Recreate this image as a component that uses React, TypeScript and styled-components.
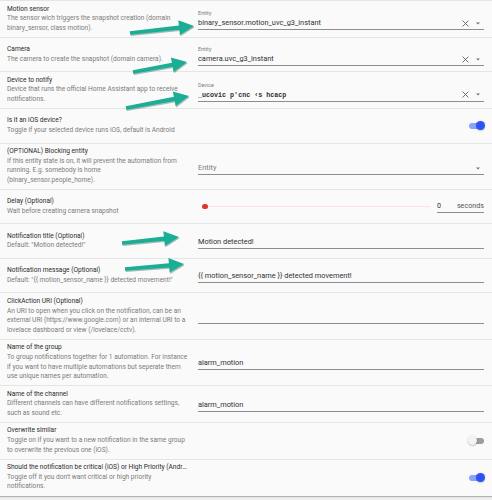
import React from 'react';
import styled, { createGlobalStyle } from 'styled-components';

const GlobalStyle = createGlobalStyle`
  html, body { margin: 0; padding: 0; background: #efefef; }
  body { font-family: Roboto, "Noto Sans", sans-serif; }
  * { box-sizing: border-box; }
`;

const Page = styled.div`
  position: relative;
  width: 492px;
  height: 500px;
  overflow: hidden;
  background: #efefef;
`;

const Card = styled.div`
  background: #fafafa;
  box-shadow: 0 1px 1px rgba(0, 0, 0, 0.25);
`;

const Row = styled.div`
  display: flex;
  align-items: center;
  min-height: 34.5px;
  padding: 3.5px 8px 3.5px 7px;
  border-top: 1px solid #e5e5e5;
`;

const Info = styled.div`
  flex: none;
  width: 182px;
  font-size: 6.6px;
  line-height: 9.6px;
`;

const Title = styled.div`
  color: #2a2a2a;
  max-width: 180px;
  white-space: nowrap;
  overflow: hidden;
  text-overflow: ellipsis;
`;

const Desc = styled.div`
  color: #7a7a7a;
`;

const Control = styled.div`
  flex: 1;
  min-width: 0;
  margin-left: 9px;
  display: flex;
  justify-content: flex-end;
  align-items: center;
`;

const Field = styled.div<{ $labeled?: boolean }>`
  flex: 1;
  min-width: 0;
  display: flex;
  flex-direction: column;
  padding-top: ${(p) => (p.$labeled ? 4 : 3)}px;
  padding-bottom: 1px;
  border-bottom: 1px solid #8e8e8e;
`;

const FloatLabel = styled.div`
  font-size: 5.4px;
  line-height: 5px;
  color: #7a7a7a;
  margin-bottom: 2px;
`;

const ValueRow = styled.div`
  display: flex;
  align-items: center;
  height: 10px;
`;

const Value = styled.div<{ $placeholder?: boolean; $scrambled?: boolean }>`
  flex: 1;
  min-width: 0;
  font-family: ${(p) => (p.$scrambled ? '"Liberation Mono", monospace' : 'Roboto, "Noto Sans", sans-serif')};
  font-weight: ${(p) => (p.$scrambled ? 700 : 400)};
  font-size: ${(p) => (p.$scrambled ? '6.7px' : '7.4px')};
  line-height: 10px;
  color: ${(p) => (p.$placeholder ? '#7a7a7a' : '#303030')};
  white-space: nowrap;
  overflow: hidden;
`;

const IconButton = styled.span<{ $gap: number }>`
  display: flex;
  align-items: center;
  justify-content: center;
  margin-right: ${(p) => p.$gap}px;
`;

const SliderWrap = styled.div`
  flex: 1;
  position: relative;
  height: 10px;
  display: flex;
  align-items: center;
  margin-left: 7px;
  margin-right: 7px;
`;

const Track = styled.div`
  flex: 1;
  height: 1.5px;
  background: #fbe2e2;
`;

const Knob = styled.div`
  position: absolute;
  left: -2.7px;
  top: 2.3px;
  width: 5.4px;
  height: 5.4px;
  border-radius: 50%;
  background: #e0342c;
`;

const NumberField = styled.div`
  flex: none;
  width: 47px;
  display: flex;
  justify-content: space-between;
  align-items: center;
  padding-top: 1px;
  padding-bottom: 1px;
  border-bottom: 1px solid #8e8e8e;
  font-size: 7.2px;
  line-height: 10px;
`;

const NumberValue = styled.span`
  color: #303030;
`;

const Suffix = styled.span`
  color: #555;
`;

const Switch = styled.div<{ $on: boolean }>`
  position: relative;
  width: 17px;
  height: 9px;
  display: flex;
  align-items: center;
  margin-right: -1px;
`;

const SwitchTrack = styled.div<{ $on: boolean }>`
  flex: 1;
  margin: 0 1px;
  height: 6px;
  border-radius: 3px;
  background: ${(p) => (p.$on ? '#8ea2fb' : '#9c9c9c')};
`;

const SwitchKnob = styled.div<{ $on: boolean }>`
  position: absolute;
  top: 0;
  left: ${(p) => (p.$on ? 8 : 0)}px;
  width: 9px;
  height: 9px;
  border-radius: 50%;
  background: ${(p) => (p.$on ? '#2c52fb' : '#f4f4f4')};
  box-shadow: 0 0.5px 1.5px rgba(0, 0, 0, 0.35);
`;

const Overlay = styled.svg`
  position: absolute;
  left: 0;
  top: 0;
  pointer-events: none;
`;

const ClearIcon = () => (
  <svg width="7" height="7" viewBox="0 0 7 7">
    <path d="M0.6 0.6 L6.4 6.4 M6.4 0.6 L0.6 6.4" stroke="#5f5f5f" strokeWidth="0.9" fill="none" />
  </svg>
);

const Caret = () => (
  <svg width="4" height="3" viewBox="0 0 4 3">
    <path d="M0 0.4 L4 0.4 L2 2.6 Z" fill="#6f6f6f" />
  </svg>
);

type FieldProps = { label?: string; value?: string; placeholder?: string; clear?: boolean; caret?: boolean; scrambled?: boolean };

const TextField = ({ label, value, placeholder, clear, caret, scrambled }: FieldProps) => (
  <Field $labeled={!!label || !!placeholder}>
    {label ? <FloatLabel>{label}</FloatLabel> : placeholder ? <FloatLabel /> : null}
    <ValueRow>
      <Value $placeholder={!value && !!placeholder} $scrambled={scrambled}>
        {value || placeholder || ''}
      </Value>
      {clear && (
        <IconButton $gap={7.5}>
          <ClearIcon />
        </IconButton>
      )}
      {caret && (
        <IconButton $gap={4}>
          <Caret />
        </IconButton>
      )}
    </ValueRow>
  </Field>
);

const Toggle = ({ on }: { on: boolean }) => (
  <Switch $on={on}>
    <SwitchTrack $on={on} />
    <SwitchKnob $on={on} />
  </Switch>
);

type Setting = { title: string; desc: string; control: React.ReactNode };

const settings: Setting[] = [
  {
    title: 'Motion sensor',
    desc: 'The sensor wich triggers the snapshot creation (domain binary_sensor, class motion).',
    control: <TextField label="Entity" value="binary_sensor.motion_uvc_g3_instant" clear caret />,
  },
  {
    title: 'Camera',
    desc: 'The camera to create the snapshot (domain camera).',
    control: <TextField label="Entity" value="camera.uvc_g3_instant" clear caret />,
  },
  {
    title: 'Device to notify',
    desc: 'Device that runs the official Home Assistant app to receive notifications.',
    control: <TextField label="Device" value="_ucovic p'cnc ‹s hcacp" clear caret scrambled />,
  },
  {
    title: 'Is it an iOS device?',
    desc: 'Toggle if your selected device runs iOS, default is Android',
    control: <Toggle on />,
  },
  {
    title: '(OPTIONAL) Blocking entity',
    desc: 'If this entity state is on, it will prevent the automation from running. E.g. somebody is home (binary_sensor.people_home).',
    control: <TextField placeholder="Entity" caret />,
  },
  {
    title: 'Delay (Optional)',
    desc: 'Wait before creating camera snapshot',
    control: (
      <>
        <SliderWrap>
          <Track />
          <Knob />
        </SliderWrap>
        <NumberField>
          <NumberValue>0</NumberValue>
          <Suffix>seconds</Suffix>
        </NumberField>
      </>
    ),
  },
  {
    title: 'Notification title (Optional)',
    desc: 'Default: "Motion detected!"',
    control: <TextField value="Motion detected!" />,
  },
  {
    title: 'Notification message (Optional)',
    desc: 'Default: "{{ motion_sensor_name }} detected movement!"',
    control: <TextField value="{{ motion_sensor_name }} detected movement!" />,
  },
  {
    title: 'ClickAction URI (Optional)',
    desc: 'An URI to open when you click on the notification, can be an external URI (https://www.google.com) or an internal URI to a lovelace dashboard or view (/lovelace/cctv).',
    control: <TextField />,
  },
  {
    title: 'Name of the group',
    desc: 'To group notifications together for 1 automation. For instance if you want to have multiple automations but seperate them use unique names per automation.',
    control: <TextField value="alarm_motion" />,
  },
  {
    title: 'Name of the channel',
    desc: 'Different channels can have different notifications settings, such as sound etc.',
    control: <TextField value="alarm_motion" />,
  },
  {
    title: 'Overwrite similar',
    desc: 'Toggle on if you want to a new notification in the same group to overwrite the previous one (iOS).',
    control: <Toggle on={false} />,
  },
  {
    title: 'Should the notification be critical (iOS) or High Priority (Android)',
    desc: "Toggle off it you don't want critical or high priority notifications.",
    control: <Toggle on />,
  },
];

type Arrow = [number, number, number, number];

const arrows: Arrow[] = [
  [130, 33, 194, 26],
  [133, 72, 187, 62],
  [126, 108, 189, 96],
  [122, 243, 179, 237],
  [125, 269, 184, 264],
];

const arrowPoints = ([x1, y1, x2, y2]: Arrow, dx = 0, dy = 0) => {
  const len = Math.hypot(x2 - x1, y2 - y1);
  const ux = (x2 - x1) / len;
  const uy = (y2 - y1) / len;
  const nx = -uy;
  const ny = ux;
  const w = 2.1;
  const L = 15;
  const H = 7.4;
  const bx = x2 - ux * L;
  const by = y2 - uy * L;
  const pts = [
    [x1 + nx * w * 0.8, y1 + ny * w * 0.8],
    [bx + nx * w, by + ny * w],
    [bx + nx * H, by + ny * H],
    [x2, y2],
    [bx - nx * H, by - ny * H],
    [bx - nx * w, by - ny * w],
    [x1 - nx * w * 0.8, y1 - ny * w * 0.8],
  ];
  return pts.map(([a, b]) => `${(a + dx).toFixed(1)},${(b + dy).toFixed(1)}`).join(' ');
};

export default function App() {
  return (
    <Page>
      <GlobalStyle />
      <Card>
        {settings.map((s) => (
          <Row key={s.title}>
            <Info>
              <Title>{s.title}</Title>
              <Desc>{s.desc}</Desc>
            </Info>
            <Control>{s.control}</Control>
          </Row>
        ))}
      </Card>
      <Overlay width="492" height="500" viewBox="0 0 492 500">
        {arrows.map((a, i) => (
          <g key={i}>
            <polygon points={arrowPoints(a, 0.6, 1.3)} fill="rgba(10,70,60,0.35)" />
            <polygon points={arrowPoints(a)} fill="#1aae95" />
          </g>
        ))}
      </Overlay>
    </Page>
  );
}
